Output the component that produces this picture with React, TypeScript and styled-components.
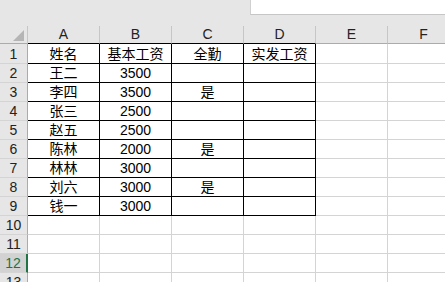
import styled, { createGlobalStyle } from 'styled-components'

const GlobalStyle = createGlobalStyle`
  html, body {
    margin: 0;
    padding: 0;
    background: #fff;
  }
  body {
    font-family: "Liberation Sans", "Noto Sans CJK SC", sans-serif;
  }
`

const COLS = ['A', 'B', 'C', 'D', 'E', 'F']

const data = [
  ['姓名', '基本工资', '全勤', '实发工资'],
  ['王二', '3500', '', ''],
  ['李四', '3500', '是', ''],
  ['张三', '2500', '', ''],
  ['赵五', '2500', '', ''],
  ['陈林', '2000', '是', ''],
  ['林林', '3000', '', ''],
  ['刘六', '3000', '是', ''],
  ['钱一', '3000', '', ''],
]

const Sheet = styled.div`
  width: 445px;
  height: 282px;
  overflow: hidden;
  background: #fff;
  color: #000;
`

const TopBar = styled.div`
  height: 26px;
  background: #e6e6e6;
  display: flex;
  justify-content: flex-end;
  align-items: flex-start;
`

const FormulaBox = styled.div`
  width: 195px;
  height: 15px;
  background: #fff;
  border-left: 1px solid #d0d0d0;
  border-bottom: 1px solid #c6c6c6;
  box-sizing: border-box;
`

const Row = styled.div<{ $h: number }>`
  display: grid;
  grid-template-columns: 28px repeat(6, 72px);
  height: ${p => p.$h}px;
`

const Corner = styled.div`
  position: relative;
  background: #e6e6e6;
  border-right: 1px solid #c6c6c6;
  border-bottom: 1px solid #ababab;
  box-sizing: border-box;
`

const Triangle = styled.div`
  position: absolute;
  right: 3px;
  bottom: 2px;
  width: 0;
  height: 0;
  border-left: 11px solid transparent;
  border-bottom: 11px solid #b5b5b5;
`

const ColHead = styled.div<{ $dark: boolean }>`
  background: #e6e6e6;
  border-right: 1px solid #c6c6c6;
  border-bottom: 1px solid ${p => (p.$dark ? '#000' : '#ababab')};
  box-sizing: border-box;
  display: flex;
  align-items: flex-end;
  justify-content: center;
  padding-bottom: 1px;
  font-size: 14px;
  line-height: 16px;
  color: #222;
`

const RowHead = styled.div<{ $active: boolean }>`
  background: ${p => (p.$active ? '#d2d2d2' : '#e6e6e6')};
  border-right: ${p => (p.$active ? '2px solid #217346' : '1px solid #ababab')};
  border-bottom: 1px solid #d4d4d4;
  box-sizing: border-box;
  display: flex;
  align-items: flex-end;
  justify-content: center;
  font-size: 14px;
  line-height: 17px;
  color: ${p => (p.$active ? '#217346' : '#222')};
`

const Cell = styled.div<{ $table: boolean }>`
  border-right: 1px solid ${p => (p.$table ? '#000' : '#d4d4d4')};
  border-bottom: 1px solid ${p => (p.$table ? '#000' : '#d4d4d4')};
  box-sizing: border-box;
  display: flex;
  align-items: flex-end;
  justify-content: center;
  font-size: 14px;
  line-height: 17px;
  white-space: nowrap;
  overflow: hidden;
`

function App() {
  const rows = Array.from({ length: 13 }, (_, i) => i + 1)
  return (
    <Sheet>
      <GlobalStyle />
      <TopBar>
        <FormulaBox />
      </TopBar>
      <Row $h={18}>
        <Corner>
          <Triangle />
        </Corner>
        {COLS.map((c, i) => (
          <ColHead key={c} $dark={i < 4}>
            {c}
          </ColHead>
        ))}
      </Row>
      {rows.map(r => {
        const values = data[r - 1] || []
        return (
          <Row key={r} $h={r === 1 ? 20 : 19}>
            <RowHead $active={r === 12}>{r}</RowHead>
            {COLS.map((c, i) => (
              <Cell key={c} $table={r <= 9 && i < 4}>
                {values[i] || ''}
              </Cell>
            ))}
          </Row>
        )
      })}
    </Sheet>
  )
}

export default App
